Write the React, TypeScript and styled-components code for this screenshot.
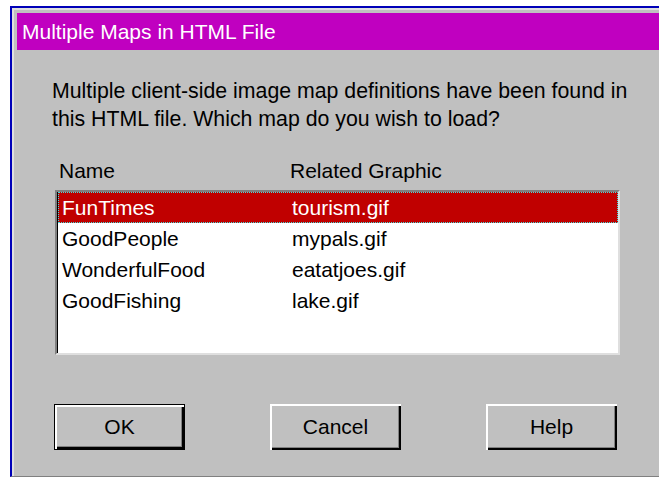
import styled, { createGlobalStyle } from "styled-components";

const GlobalStyle = createGlobalStyle`
  html, body {
    margin: 0;
    padding: 0;
    background: #ffffff;
  }
  body {
    font-family: "Liberation Sans", Arial, sans-serif;
  }
`;

const Screen = styled.div`
  width: 659px;
  height: 478px;
  padding: 6px 0 0 10px;
  box-sizing: border-box;
  overflow: hidden;
`;

const Window = styled.div`
  height: 468px;
  border-top: 2px solid #0000b8;
  border-left: 2px solid #0000b8;
  border-bottom: 1px solid #808080;
  background: #c0c0c0;
  display: flex;
  flex-direction: column;
`;

const Frame = styled.div`
  flex: 1;
  display: flex;
  flex-direction: column;
  border-top: 2px solid #dfdfdf;
  border-left: 2px solid #dfdfdf;
  padding: 3px 0 0 3px;
`;

const TitleBar = styled.div`
  height: 37px;
  background: #c000c0;
  color: #ffffff;
  font-size: 21px;
  display: flex;
  align-items: center;
  padding-left: 5px;
  box-sizing: border-box;
`;

const Body = styled.div`
  flex: 1;
  display: flex;
  flex-direction: column;
  padding: 27px 0 0 35px;
  font-size: 21px;
  color: #000000;
`;

const Message = styled.p`
  margin: 0;
  font-size: 21.3px;
  line-height: 28px;
`;

const Columns = styled.div`
  display: grid;
  grid-template-columns: 231px 1fr;
  margin: 24px 0 0 7px;
  line-height: 28px;
`;

const ListBox = styled.div`
  margin: 5px 0 0 3px;
  width: 565px;
  height: 165px;
  box-sizing: border-box;
  background: #ffffff;
  border-top: 2px solid #808080;
  border-left: 2px solid #808080;
  border-right: 2px solid #dfdfdf;
  border-bottom: 2px solid #dfdfdf;
  box-shadow: inset 1px 1px 0 #000000;
  padding: 0 0 0 1px;
`;

const Row = styled.div<{ $selected?: boolean }>`
  display: grid;
  grid-template-columns: 230px 1fr;
  height: 31px;
  line-height: 31px;
  padding-left: 4px;
  color: ${(p) => (p.$selected ? "#ffffff" : "#000000")};
  background: ${(p) => (p.$selected ? "#c00000" : "transparent")};
  outline: ${(p) => (p.$selected ? "1px dotted #40e0e0" : "none")};
  outline-offset: -1px;
`;

const ButtonRow = styled.div`
  display: flex;
  gap: 85px;
  margin: 49px 0 0 2px;
`;

// raised 3D push button; the default one gets an extra black frame
const Button = styled.button<{ $default?: boolean }>`
  width: 131px;
  height: 46px;
  padding: 0;
  font-family: "Liberation Sans", Arial, sans-serif;
  font-size: 21px;
  color: #000000;
  background: #c0c0c0;
  border: ${(p) => (p.$default ? "1px solid #000000" : "none")};
  box-shadow: inset 2px 2px 0 #ffffff, inset -2px -2px 0 #000000,
    inset -3px -3px 0 #808080;
`;

const maps = [
  { name: "FunTimes", graphic: "tourism.gif" },
  { name: "GoodPeople", graphic: "mypals.gif" },
  { name: "WonderfulFood", graphic: "eatatjoes.gif" },
  { name: "GoodFishing", graphic: "lake.gif" },
];

const App = () => {
  return (
    <>
      <GlobalStyle />
      <Screen>
        <Window>
          <Frame>
            <TitleBar>Multiple Maps in HTML File</TitleBar>
            <Body>
              <Message>
                Multiple client-side image map definitions have been found in
                <br />
                this HTML file. Which map do you wish to load?
              </Message>
              <Columns>
                <span>Name</span>
                <span>Related Graphic</span>
              </Columns>
              <ListBox>
                {maps.map((m, i) => (
                  <Row key={m.name} $selected={i === 0}>
                    <span>{m.name}</span>
                    <span>{m.graphic}</span>
                  </Row>
                ))}
              </ListBox>
              <ButtonRow>
                <Button $default>OK</Button>
                <Button>Cancel</Button>
                <Button>Help</Button>
              </ButtonRow>
            </Body>
          </Frame>
        </Window>
      </Screen>
    </>
  );
};

export default App;
